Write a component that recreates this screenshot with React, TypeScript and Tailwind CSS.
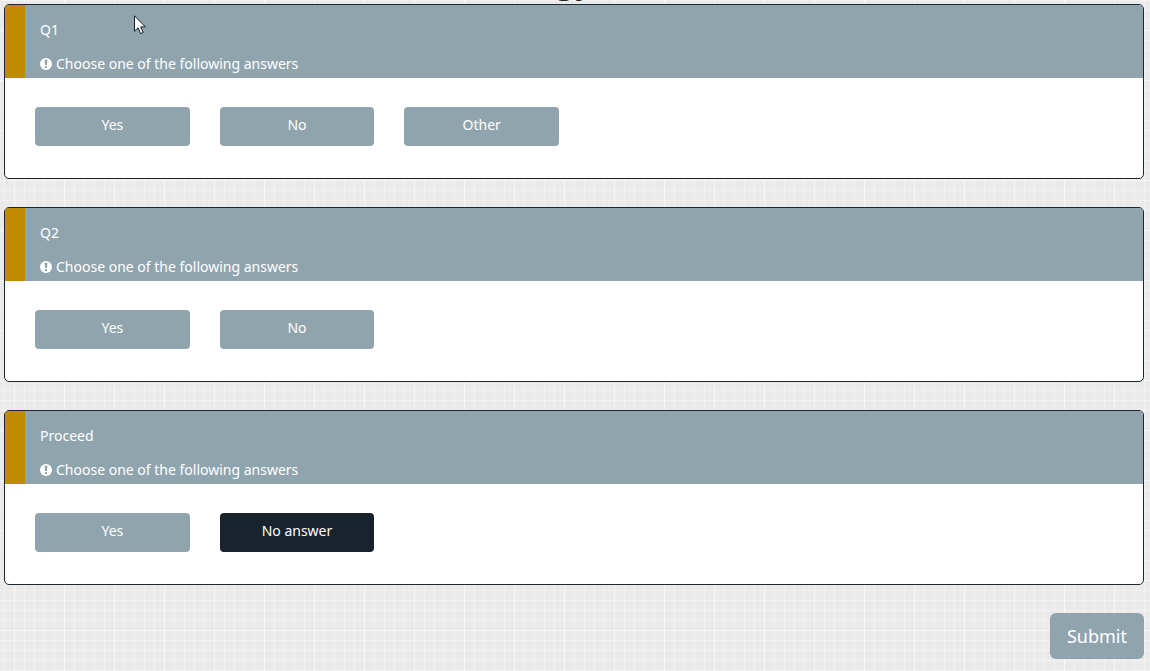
import { useState } from 'react'

type Question = {
    id: string
    title: string
    answers: string[]
    selected?: string
}

const questions: Question[] = [
    { id: 'q1', title: 'Q1', answers: ['Yes', 'No', 'Other'] },
    { id: 'q2', title: 'Q2', answers: ['Yes', 'No'] },
    { id: 'proceed', title: 'Proceed', answers: ['Yes', 'No answer'], selected: 'No answer' },
]

const ExclamationIcon = () => (
    <svg aria-hidden="true" viewBox="0 0 12 12" className="size-3 shrink-0">
        <circle cx="6" cy="6" r="6" fill="#fff" />
        <path d="M4.6 1.8H7.4L7 7H5ZM5 8H7V10H5Z" fill="#90a4ad" />
    </svg>
)

const QuestionCard = ({ question }: { question: Question }) => {
    const [value, setValue] = useState(question.selected)

    return (
        <section className="overflow-hidden rounded-[5px] border border-[#1c2830] bg-white">
            <header className="border-l-20 border-[#c08b00] bg-[#90a4ad] px-[15px] pt-[15px] pb-1 text-white">
                <h2 id={question.id} className="leading-5">{question.title}</h2>
                <p className="mt-3.5 flex items-center gap-1 leading-5">
                    <ExclamationIcon />
                    Choose one of the following answers
                </p>
            </header>
            <div
                role="radiogroup"
                aria-labelledby={question.id}
                className="grid grid-cols-6 gap-[30px] px-[30px] pt-[29px] pb-8"
            >
                {question.answers.map((answer) => (
                    <label
                        key={answer}
                        className="relative cursor-pointer rounded bg-[#90a4ad] pt-2 pb-[11px] text-center leading-5 text-white has-checked:bg-[#19232d]"
                    >
                        <input
                            type="radio"
                            name={question.id}
                            value={answer}
                            checked={value === answer}
                            onChange={() => setValue(answer)}
                            className="sr-only"
                        />
                        {answer}
                    </label>
                ))}
            </div>
        </section>
    )
}

// Graph paper: a line every 10px, a stronger one every 50px
const paper =
    'bg-[#eaeaea] bg-[position:14px_0,0_30px,4px_0,0_0] bg-[size:50px_50px,50px_50px,10px_10px,10px_10px] bg-[image:linear-gradient(90deg,#ffffff60_1px,transparent_1px),linear-gradient(#ffffff60_1px,transparent_1px),linear-gradient(90deg,#ffffff50_1px,transparent_1px),linear-gradient(#ffffff50_1px,transparent_1px)]'

const App = () => {
    return (
        <main className={`min-h-screen pr-1.5 pl-1 font-['Noto_Sans',sans-serif] text-sm ${paper}`}>
            {/* Only the descenders of the page heading are still in view */}
            <div className="flex h-1 items-end justify-center overflow-hidden">
                <h1 className="pb-[5px] text-4xl leading-10 text-[#222]">gy</h1>
            </div>
            <form className="flex flex-col gap-7" onSubmit={(e) => e.preventDefault()}>
                {questions.map((question) => (
                    <QuestionCard key={question.id} question={question} />
                ))}
                <button
                    type="submit"
                    className="cursor-pointer self-end rounded-md bg-[#90a4ad] px-[17px] py-2.5 text-lg leading-[26px] text-white"
                >
                    Submit
                </button>
            </form>
            <svg
                aria-hidden="true"
                viewBox="0 0 12 20"
                className="pointer-events-none absolute top-[15px] left-[134px] h-5 w-3"
            >
                <path
                    d="M.5.8V16.2L4.1 12.8L6.6 18.6L9.2 17.5L6.7 11.9H11.4Z"
                    fill="#fff"
                    stroke="#151d2e"
                />
            </svg>
        </main>
    )
}

export default App
